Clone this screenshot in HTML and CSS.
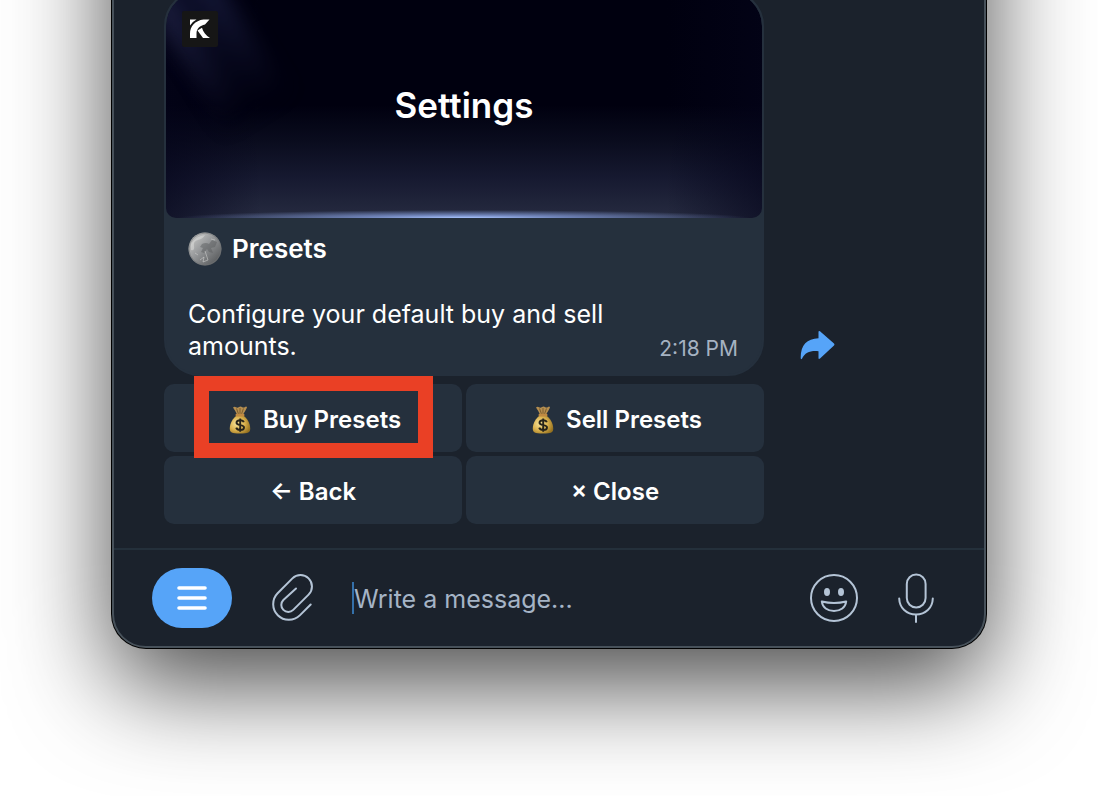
FILE: index.html
```html
<!DOCTYPE html>
<html lang="en">
<head>
<meta charset="utf-8">
<title>Presets</title>
<meta name="viewport" content="width=device-width, initial-scale=1">
<link rel="stylesheet" href="styles.css">
</head>
<body>
<svg class="defs" aria-hidden="true">
  <defs>
    <radialGradient id="gold" cx="35%" cy="45%" r="70%">
      <stop offset="0" stop-color="#f8e49a"/><stop offset=".55" stop-color="#d9b04c"/><stop offset="1" stop-color="#94701f"/>
    </radialGradient>
    <linearGradient id="moonshade" x1="0" y1="0" x2="1" y2="1">
      <stop offset="0" stop-color="#d4d4d2"/><stop offset=".45" stop-color="#96989a"/><stop offset="1" stop-color="#4a4c4e"/>
    </linearGradient>
    <symbol id="moneybag" viewBox="0 0 22 28">
      <path d="M4 1.500Q5.500.2 7 1.200T10 1t3 0 3-.1 2 .7Q16.500 5 14 8.500H8Q6.500 5 4 1.500Z" fill="#b58e50"/>
      <path d="M7.500 2.500 9.500 8M11 2v6M14.500 2.500 12.500 8" stroke="#805f2c" fill="none"/>
      <path d="M8 9.500C4 12 .8 17 .8 22.500.8 26.500 2.500 27.500 11 27.500s10.200-1 10.200-5C21.200 17 18 12 14 9.500Z" fill="url(#gold)"/>
      <rect x="6.500" y="7.800" width="9" height="2.600" rx="1.300" fill="#c08a42"/>
      <path d="M14.800 16.200C14.300 14.800 13 14.200 11.200 14.200 9 14.200 7.500 15.200 7.500 16.800 7.500 20.200 15 18 15 21.400 15 23 13.400 24 11.200 24 9.200 24 7.700 23.200 7.200 21.600M11.200 12.500v13.200" fill="none" stroke="#26231a" stroke-width="1.900"/>
    </symbol>
  </defs>
</svg>

<main class="window">
  <section class="chat">
    <div class="row">
      <article class="bubble">
        <header class="banner">
          <svg class="logo" viewBox="0 0 36 36" role="img" aria-label="K">
            <rect width="36" height="36" rx="2" fill="#161616"/>
            <path d="M8 8.500h6.500Q10.500 10.500 8 14.500Z M27.500 8.500h-6C13 9.500 8 15.500 8 22.500V27h6.500v-4.500C14.500 17.500 18 14.500 23 13.500Z M15.500 19.500 20 16.800C21 21 24 24.500 28 27h-7Z" fill="#fff"/>
          </svg>
          <h1 class="banner-title">Settings</h1>
        </header>
        <div class="body">
          <h2 class="heading">
            <svg class="moon" viewBox="0 0 34 34" aria-hidden="true">
              <circle cx="17" cy="17" r="16.500" fill="url(#moonshade)"/>
              <path d="M3 12Q8 4 17 3q-2 4-7 5t-4 6-3 4Z" fill="#e6e6e4" opacity=".45"/>
              <path d="M14 12q4-2 7 0l3-4 5 2-2 5-4 1 2 5-4-1-2-3-3 4-3-1 2-4-3-1Z" fill="#56585a" opacity=".45"/>
              <path d="M17 19l3 9-5 2 1-5-4 3M23 7l4 1M7 21l3 2" stroke="#d9d9d7" fill="none" opacity=".5"/>
              <circle cx="17" cy="17" r="16" fill="none" stroke="#717374" opacity=".6"/>
            </svg>
            Presets
          </h2>
          <div class="copy">
            <p class="text">Configure your default buy and sell amounts.</p>
            <time class="time">2:18 PM</time>
          </div>
        </div>
      </article>
      <button class="share" type="button" aria-label="Share">
        <svg viewBox="0 0 36 30" width="36" height="30"><path d="M18.500 2Q18.500.3 20 1.200L34 13.500Q35 14.500 34 15.500L20 28.500Q18.500 29.500 18.500 28V21.200C10 20.500 5 22.500 2 28.800Q.6 30 .7 27.500C.7 15 7 8.600 18.500 8.200Z" fill="#56a4f8"/></svg>
      </button>
    </div>
    <div class="keyboard">
      <button class="key marked" type="button"><svg class="bag" aria-hidden="true"><use href="#moneybag"/></svg>Buy Presets</button>
      <button class="key" type="button"><svg class="bag" aria-hidden="true"><use href="#moneybag"/></svg>Sell Presets</button>
      <button class="key" type="button">← Back</button>
      <button class="key" type="button">× Close</button>
    </div>
  </section>
  <form class="composer">
    <button class="menu" type="button" aria-label="Menu">
      <svg viewBox="0 0 30 24" width="30" height="24"><path d="M2 2h26M2 12h26M2 22h26" stroke="#fff" stroke-width="3.600" stroke-linecap="round"/></svg>
    </button>
    <button class="tool" type="button" aria-label="Attach a file">
      <svg viewBox="0 0 42 48" width="42" height="48"><path d="M24 14.500 11.350 25.950A7 7 0 0 0 21.250 35.850L36.600 20.600A11.450 11.450 0 0 0 20.400 4.400L5.600 19.200A15.700 15.700 0 0 0 27.800 41.400L38.700 30.500"/></svg>
    </button>
    <label class="field">
      <input class="input" type="text" placeholder="Write a message..." aria-label="Message">
    </label>
    <button class="tool" type="button" aria-label="Emoji">
      <svg viewBox="0 0 48 48" width="48" height="48"><circle cx="24" cy="24" r="23"/><ellipse class="eye" cx="17" cy="18" rx="3" ry="4"/><ellipse class="eye" cx="31" cy="18" rx="3" ry="4"/><path d="M11.800 27.500Q24 30.500 36.200 27.500C35.500 33.500 30.500 37 24 37S12.500 33.500 11.800 27.500Z"/></svg>
    </button>
    <button class="tool" type="button" aria-label="Record a voice message">
      <svg viewBox="0 0 36 50" width="36" height="50"><rect x="8.800" y="1.500" width="18.800" height="33" rx="9.400"/><path d="M1.200 25.500C1.500 35 8.500 41.500 18 41.500S34.500 35 34.800 25.500M18 41.500V49"/></svg>
    </button>
  </form>
</main>
</body>
</html>
```
FILE: styles.css
```css
* { box-sizing: border-box; }

body {
  margin: 0;
  min-height: 100vh;
  overflow: hidden;
  background: #fff;
  color: #fff;
  font-family: Inter, "Liberation Sans", sans-serif;
}

h1, h2, p { margin: 0; }

button {
  padding: 0;
  border: 0;
  background: none;
  color: inherit;
  font: inherit;
}

svg { display: block; flex: none; }

.defs { position: absolute; width: 0; height: 0; }

.window {
  margin: -200px 112px 0;
  padding-top: 188px;
  border: 2px solid #47515a;
  border-radius: 34px;
  background: #1b222c;
  box-shadow: 0 0 0 1px #000, 0 36px 100px rgba(0, 0, 0, .72);
}

.chat { padding: 0 50px 24px; }

.row {
  display: flex;
  align-items: flex-end;
  gap: 36px;
}

.bubble {
  flex: 0 1 600px;
  border: 2px solid #25303d;
  border-radius: 36px;
  background: #25303d;
  overflow: hidden;
}

.banner {
  position: relative;
  display: flex;
  align-items: center;
  justify-content: center;
  height: 226px;
  border-radius: 34px 34px 10px 10px;
  background:
    radial-gradient(ellipse 48% 8px at 50% 100%, #a9c4ff 0, #6f83b8 35%, transparent 100%),
    linear-gradient(90deg, rgba(4, 4, 26, .6), transparent 16% 84%, rgba(4, 4, 26, .6)),
    linear-gradient(#00000f 50%, #0a0c1e 66%, #161930 82%, #262b40 100%);
  overflow: hidden;
}

/* Light beam behind the logo */
.banner::before {
  content: "";
  position: absolute;
  top: -60px;
  left: 4px;
  width: 70px;
  height: 190px;
  background:
    linear-gradient(transparent 40%, #00000f),
    linear-gradient(90deg, #30345c, #0c0e28 45%, #20244a);
  filter: blur(10px);
  transform: rotate(-32deg);
  opacity: .75;
}

.logo {
  position: absolute;
  top: 19px;
  left: 16px;
  width: 36px;
  height: 36px;
}

.banner-title {
  position: relative;
  font-size: 35px;
  font-weight: 600;
  line-height: 44px;
}

.body { padding: 14px 24px 12px 22px; }

.heading {
  display: flex;
  align-items: center;
  gap: 10px;
  margin-bottom: 32px;
  font-size: 26px;
  font-weight: 600;
  line-height: 34px;
}

.moon { width: 34px; height: 34px; }

.copy {
  display: flex;
  align-items: flex-end;
  justify-content: space-between;
}

.text {
  max-width: 450px;
  font-size: 25px;
  line-height: 32px;
}

.time {
  color: #a5b2c2;
  font-size: 21px;
  line-height: 26px;
  white-space: nowrap;
}

.share { margin-bottom: 16px; }

.keyboard {
  display: grid;
  grid-template-columns: 1fr 1fr;
  gap: 4px;
  max-width: 600px;
  margin-top: 8px;
}

.key {
  position: relative;
  display: flex;
  align-items: center;
  justify-content: center;
  gap: 12px;
  height: 68px;
  padding-top: 4px;
  border-radius: 10px;
  background: #25303d;
  font-size: 24px;
  font-weight: 600;
  line-height: 32px;
}

.marked { z-index: 1; }

.marked::after {
  content: "";
  position: absolute;
  inset: -8px 29px -6px 30px;
  border: 15px solid #ea4025;
}

.bag { width: 22px; height: 28px; margin-left: 4px; }

.composer {
  display: flex;
  align-items: center;
  gap: 40px;
  height: 98px;
  padding: 0 50px 0 38px;
  border-top: 2px solid #24303b;
}

.menu {
  display: flex;
  align-items: center;
  justify-content: center;
  width: 80px;
  height: 60px;
  border-radius: 30px;
  background: #56a4f8;
}

.tool svg {
  fill: none;
  stroke: #b4c4d6;
  stroke-width: 2;
  stroke-linecap: round;
  stroke-linejoin: round;
}

.tool .eye { fill: #b4c4d6; stroke: none; }

.field {
  position: relative;
  flex: 1;
  min-width: 0;
}

/* Text caret */
.field::before {
  content: "";
  position: absolute;
  inset: 0 auto 0 -2px;
  width: 2px;
  background: #3470aa;
}

.input {
  display: block;
  width: 100%;
  height: 32px;
  padding: 2px 0 0;
  border: 0;
  outline: 0;
  background: none;
  color: #fff;
  font: 25px/30px Inter, "Liberation Sans", sans-serif;
}

.input::placeholder { color: #a5b4c6; opacity: 1; }
```
